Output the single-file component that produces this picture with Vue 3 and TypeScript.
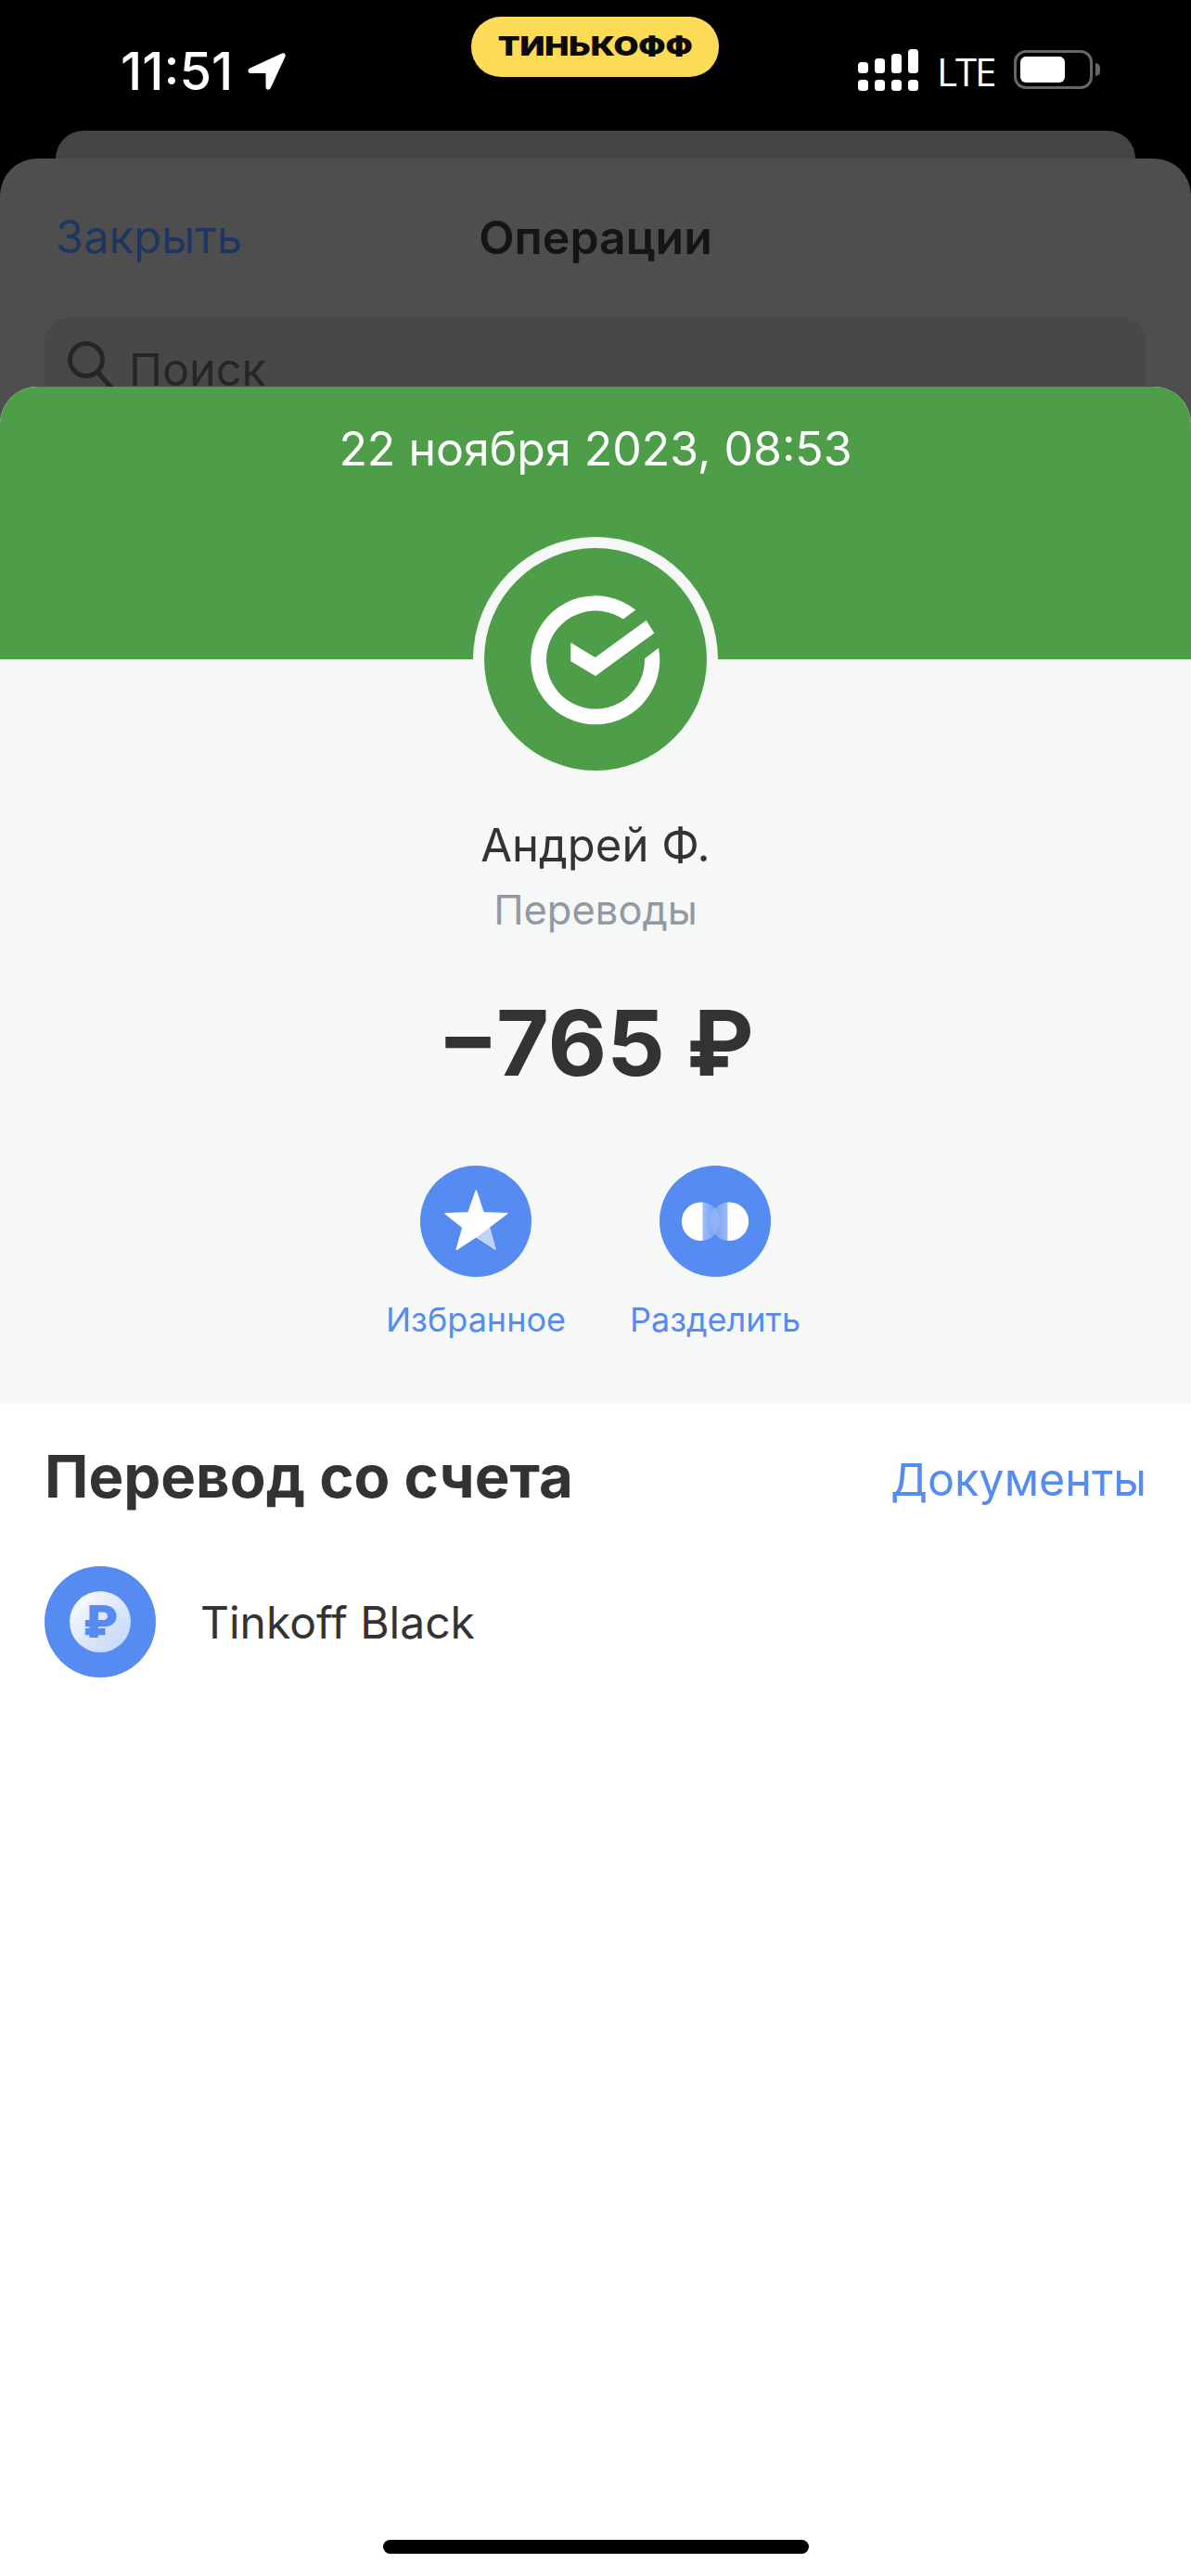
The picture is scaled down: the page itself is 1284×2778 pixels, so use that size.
<template>
  <div class="screen">
    <div class="backdrop">
      <div class="status-bar">
        <div class="status-left">
          <span class="time">11:51</span>
          <svg class="arrow" width="41" height="40" viewBox="0 0 41 40">
            <path d="M37 0.6 L2.5 16.5 C-0.5 18 0 22 3.5 22 L19.5 22 L19.5 36.5 C19.5 40.5 23.5 40.8 25 37.5 L40.5 4 C41.5 1.5 39.5 -0.5 37 0.6 Z" fill="#fff" />
          </svg>
        </div>
        <div class="brand-pill"><span>ТИНЬКОФФ</span></div>
        <div class="status-right">
          <div class="signal">
            <div v-for="bar in signalBars" :key="bar" class="signal-col">
              <span class="signal-top" :style="{ height: bar + 'px' }"></span>
              <span class="signal-dot"></span>
            </div>
          </div>
          <span class="lte">LTE</span>
          <div class="battery">
            <div class="battery-body"><span class="battery-fill"></span></div>
            <span class="battery-cap"></span>
          </div>
        </div>
      </div>
      <div class="back-card"></div>
      <div class="front-card">
        <div class="nav-row">
          <span class="nav-close">Закрыть</span>
          <span class="nav-title">Операции</span>
        </div>
        <div class="search">
          <svg width="52" height="60" viewBox="0 0 52 60" fill="none" stroke="#262626" stroke-width="5">
            <circle cx="21" cy="20" r="17.5" />
            <path d="M33 33 L48 50" />
          </svg>
          <span>Поиск</span>
        </div>
      </div>
    </div>

    <div class="sheet">
      <div class="sheet-head">22 ноября 2023, 08:53</div>
      <div class="hero">
        <div class="avatar">
          <svg width="240" height="240" viewBox="0 0 240 240">
            <circle cx="120" cy="120" r="120" fill="#4e9e49" />
            <path d="M163.3 66.7 A69.5 69.5 0 1 0 188 107.7 L173 119.3 A53 53 0 1 1 149.7 76.7 Z" fill="#fff" />
            <path d="M93.3 102 L119.7 118 L174.7 78 L183.3 91.7 L120 138 L93.3 122 Z" fill="#fff" />
          </svg>
        </div>
        <div class="name">Андрей Ф.</div>
        <div class="category">Переводы</div>
        <div class="amount">−765 ₽</div>
        <div class="actions">
          <div class="action">
            <svg width="120" height="120" viewBox="0 0 120 120">
              <circle cx="60" cy="60" r="60" fill="#568bf2" />
              <path d="M60.3 77 L74.7 66.7 L81.3 90.7 Z" fill="#fff" fill-opacity="0.62" stroke="#fff" stroke-opacity="0.62" stroke-width="1" stroke-linejoin="round" />
              <path d="M60.3 27.2 L68 50.7 L93.6 51.7 L60.3 76.7 L39.4 90.3 L46 66.7 L27.2 51.7 L52 50.7 Z" fill="#fff" stroke="#fff" stroke-width="1.6" stroke-linejoin="round" />
            </svg>
            <span>Избранное</span>
          </div>
          <div class="action">
            <svg width="120" height="120" viewBox="0 0 120 120">
              <defs>
                <linearGradient id="splitLeft" x1="46.7" x2="66" y1="0" y2="0" gradientUnits="userSpaceOnUse">
                  <stop offset="0" stop-color="#fff" stop-opacity="0.42" />
                  <stop offset="1" stop-color="#fff" stop-opacity="0.08" />
                </linearGradient>
                <linearGradient id="splitRight" x1="73.3" x2="54" y1="0" y2="0" gradientUnits="userSpaceOnUse">
                  <stop offset="0" stop-color="#fff" stop-opacity="0.42" />
                  <stop offset="1" stop-color="#fff" stop-opacity="0.08" />
                </linearGradient>
                <clipPath id="splitClipL"><rect x="20" y="30" width="26.7" height="60" /></clipPath>
                <clipPath id="splitClipR"><rect x="73.3" y="30" width="30" height="60" /></clipPath>
                <clipPath id="splitClipML"><rect x="46.7" y="30" width="30" height="60" /></clipPath>
                <clipPath id="splitClipMR"><rect x="44" y="30" width="29.3" height="60" /></clipPath>
              </defs>
              <circle cx="60" cy="60" r="60" fill="#568bf2" />
              <circle cx="44.7" cy="60.2" r="20.8" fill="url(#splitLeft)" clip-path="url(#splitClipML)" />
              <circle cx="75.3" cy="60.2" r="20.8" fill="url(#splitRight)" clip-path="url(#splitClipMR)" />
              <circle cx="44.7" cy="60.2" r="20.8" fill="#fff" clip-path="url(#splitClipL)" />
              <circle cx="75.3" cy="60.2" r="20.8" fill="#fff" clip-path="url(#splitClipR)" />
            </svg>
            <span>Разделить</span>
          </div>
        </div>
      </div>
      <div class="details">
        <div class="section-head">
          <span class="section-title">Перевод со счета</span>
          <span class="section-link">Документы</span>
        </div>
        <div class="account">
          <div class="account-icon">
            <div class="account-coin">₽</div>
          </div>
          <span class="account-name">Tinkoff Black</span>
        </div>
      </div>
      <div class="home-indicator"></div>
    </div>
  </div>
</template>

<script setup lang="ts">
const signalBars: number[] = [12, 16, 21, 26]
</script>

<style>
html,
body {
  margin: 0;
  background: #000;
}
</style>

<style scoped>
.screen {
  position: relative;
  width: 1284px;
  height: 2778px;
  overflow: hidden;
  background: #000;
  font-family: Inter, "Noto Sans", sans-serif;
}

.status-bar {
  position: relative;
  display: flex;
  justify-content: space-between;
  height: 141px;
  box-sizing: border-box;
  padding: 53px 98px 0 130px;
}

.status-left {
  display: flex;
  align-items: flex-start;
  gap: 16px;
}

.time {
  color: #fff;
  font-size: 56px;
  font-weight: 500;
  line-height: 48px;
}

.arrow {
  margin-top: 4px;
}

.brand-pill {
  position: absolute;
  left: 508px;
  top: 18px;
  width: 267px;
  height: 65px;
  border-radius: 32px;
  background: #fcdc56;
  color: #0a0a0a;
  font-size: 28px;
  font-weight: 900;
  line-height: 65px;
  text-align: center;
}

.brand-pill span {
  display: inline-block;
  transform: scaleX(1.24);
}

.status-right {
  display: flex;
  align-items: flex-start;
}

.signal {
  display: flex;
  gap: 7px;
  height: 45px;
  align-items: flex-end;
}

.signal-col {
  display: flex;
  flex-direction: column;
  gap: 7px;
  width: 11px;
}

.signal-top,
.signal-dot {
  display: block;
  border-radius: 3.5px;
  background: #fff;
}

.signal-dot {
  height: 12px;
}

.lte {
  width: 62px;
  margin-left: 20px;
  color: #fff;
  font-family: "Open Sans", sans-serif;
  font-size: 42px;
  line-height: 48px;
  letter-spacing: -2px;
  white-space: nowrap;
}

.battery {
  display: flex;
  align-items: center;
  margin-left: 21px;
  height: 42px;
  margin-top: 1px;
}

.battery-body {
  width: 85px;
  height: 42px;
  box-sizing: border-box;
  border: 3px solid #666;
  border-radius: 13px;
  padding: 4px;
}

.battery-fill {
  display: block;
  width: 48px;
  height: 100%;
  border-radius: 6px;
  background: #fff;
}

.battery-cap {
  width: 5px;
  height: 14px;
  margin-left: 3px;
  border-radius: 0 7px 7px 0;
  background: #666;
}

.back-card {
  height: 30px;
  margin: 0 60px;
  border-radius: 36px 36px 0 0;
  background: #454545;
}

.front-card {
  height: 400px;
  box-sizing: border-box;
  padding: 54px 48px 0;
  border-radius: 40px 40px 0 0;
  background: #4e4e4e;
}

.nav-row {
  position: relative;
  display: flex;
  justify-content: center;
  height: 62px;
  line-height: 62px;
}

.nav-close {
  position: absolute;
  left: 12px;
  color: #1f3562;
  font-size: 49px;
}

.nav-title {
  color: #151515;
  font-size: 50px;
  font-weight: 600;
}

.search {
  display: flex;
  gap: 15px;
  align-items: center;
  height: 112px;
  margin-top: 55px;
  padding: 0 24px;
  border-radius: 28px;
  background: #484848;
  color: #262626;
  font-size: 48.5px;
}

.sheet {
  position: absolute;
  top: 417px;
  left: 0;
  right: 0;
  bottom: 0;
  display: flex;
  flex-direction: column;
  border-radius: 40px 40px 0 0;
  overflow: hidden;
  background: #fff;
}

.sheet-head {
  height: 294px;
  box-sizing: border-box;
  padding-top: 37px;
  background: #4e9e49;
  color: #fff;
  font-size: 50px;
  line-height: 60px;
  text-align: center;
}

.hero {
  display: flex;
  flex-direction: column;
  align-items: center;
  height: 803px;
  background: #f6f8f8;
}

.avatar {
  display: flex;
  width: 264px;
  height: 264px;
  box-sizing: border-box;
  padding: 12px;
  margin-top: -132px;
  border-radius: 50%;
  background: #f6f8f8;
}

.name {
  margin-top: 35px;
  color: #333;
  font-size: 49px;
  line-height: 68px;
}

.category {
  margin-top: 5px;
  color: #9299a2;
  font-size: 43.5px;
  line-height: 60px;
}

.amount {
  margin-top: 52px;
  color: #333;
  font-size: 98px;
  font-weight: 700;
  line-height: 124px;
}

.actions {
  display: flex;
  justify-content: center;
  gap: 66px;
  margin-top: 70px;
}

.action {
  display: flex;
  flex-direction: column;
  align-items: center;
  gap: 21px;
  width: 192px;
  color: #568bf2;
  font-size: 36px;
  line-height: 50px;
  white-space: nowrap;
}

.details {
  padding: 0 48px;
}

.section-head {
  display: flex;
  justify-content: space-between;
  align-items: center;
  height: 154px;
}

.section-title {
  color: #333;
  font-size: 63.5px;
  font-weight: 700;
}

.section-link {
  padding-top: 8px;
  color: #568bf2;
  font-size: 48.5px;
}

.account {
  display: flex;
  align-items: center;
  gap: 48px;
  margin-top: 21px;
}

.account-icon {
  display: flex;
  align-items: center;
  justify-content: center;
  width: 120px;
  height: 120px;
  border-radius: 50%;
  background: #568bf2;
}

.account-coin {
  width: 66px;
  height: 66px;
  border-radius: 50%;
  background: linear-gradient(135deg, #fff, #bfd2f7);
  color: #568bf2;
  font-size: 48px;
  font-weight: 900;
  line-height: 66px;
  text-align: center;
}

.account-name {
  color: #333;
  font-size: 48px;
}

.home-indicator {
  position: absolute;
  left: 413px;
  bottom: 24px;
  width: 459px;
  height: 15px;
  border-radius: 8px;
  background: #000;
}
</style>
